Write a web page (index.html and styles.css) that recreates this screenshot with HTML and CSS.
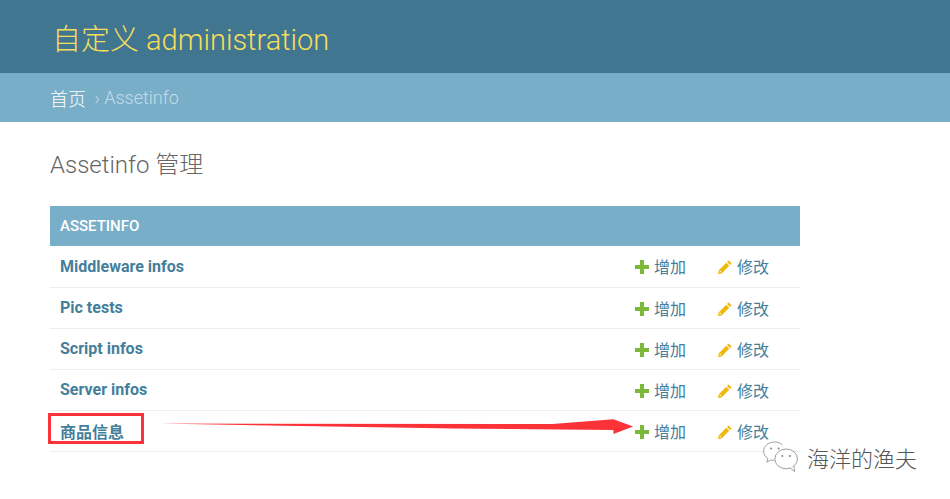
FILE: index.html
```html
<!DOCTYPE html>
<html lang="zh-CN">
<head>
    <meta charset="UTF-8">
    <title>Assetinfo 管理</title>
    <link rel="stylesheet" href="styles.css">
</head>
<body>
    <header class="site-header">
        <h1>自定义 administration</h1>
    </header>
    <nav class="breadcrumbs"><a href="#">首页</a> › Assetinfo</nav>

    <main class="content">
        <h2>Assetinfo 管理</h2>
        <table class="module">
            <caption>ASSETINFO</caption>
            <tbody>
                <tr>
                    <th>Middleware infos</th>
                    <td class="action"><svg class="icon" viewBox="0 0 14 14"><path class="plus" d="M5 0h4v5h5v4H9v5H5V9H0V5h5z"/></svg>增加</td>
                    <td class="action"><svg class="icon" viewBox="0 0 14 14"><path class="pencil" d="M10.6.4l3 3-1.6 1.6-3-3zM8.2 2.8l3 3-7.6 7.6L0 14l.6-3.6zM1.9 10.6l-.5 2 2 -.5z"/></svg>修改</td>
                </tr>
                <tr>
                    <th>Pic tests</th>
                    <td class="action"><svg class="icon" viewBox="0 0 14 14"><path class="plus" d="M5 0h4v5h5v4H9v5H5V9H0V5h5z"/></svg>增加</td>
                    <td class="action"><svg class="icon" viewBox="0 0 14 14"><path class="pencil" d="M10.6.4l3 3-1.6 1.6-3-3zM8.2 2.8l3 3-7.6 7.6L0 14l.6-3.6zM1.9 10.6l-.5 2 2 -.5z"/></svg>修改</td>
                </tr>
                <tr>
                    <th>Script infos</th>
                    <td class="action"><svg class="icon" viewBox="0 0 14 14"><path class="plus" d="M5 0h4v5h5v4H9v5H5V9H0V5h5z"/></svg>增加</td>
                    <td class="action"><svg class="icon" viewBox="0 0 14 14"><path class="pencil" d="M10.6.4l3 3-1.6 1.6-3-3zM8.2 2.8l3 3-7.6 7.6L0 14l.6-3.6zM1.9 10.6l-.5 2 2 -.5z"/></svg>修改</td>
                </tr>
                <tr>
                    <th>Server infos</th>
                    <td class="action"><svg class="icon" viewBox="0 0 14 14"><path class="plus" d="M5 0h4v5h5v4H9v5H5V9H0V5h5z"/></svg>增加</td>
                    <td class="action"><svg class="icon" viewBox="0 0 14 14"><path class="pencil" d="M10.6.4l3 3-1.6 1.6-3-3zM8.2 2.8l3 3-7.6 7.6L0 14l.6-3.6zM1.9 10.6l-.5 2 2 -.5z"/></svg>修改</td>
                </tr>
                <tr>
                    <th>商品信息</th>
                    <td class="action"><svg class="icon" viewBox="0 0 14 14"><path class="plus" d="M5 0h4v5h5v4H9v5H5V9H0V5h5z"/></svg>增加</td>
                    <td class="action"><svg class="icon" viewBox="0 0 14 14"><path class="pencil" d="M10.6.4l3 3-1.6 1.6-3-3zM8.2 2.8l3 3-7.6 7.6L0 14l.6-3.6zM1.9 10.6l-.5 2 2 -.5z"/></svg>修改</td>
                </tr>
            </tbody>
        </table>
    </main>

    <!-- annotations drawn over the screenshot -->
    <div class="red-box"></div>
    <svg class="red-arrow" viewBox="0 0 490 22"><path d="M0 6.500L400 7L462 2 L482 9.500L462 17L462 13L300 11.500z"/></svg>

    <div class="watermark">
        <svg class="wechat" viewBox="0 0 38 34">
            <path d="M21 4.500C19 2 16 1 13 1 6.500 1 1 5.300 1 10.800c0 3.200 2 6 4.500 7.800L4.500 22.500l4.500-2.400c1.300.4 2.500.6 3.500.6"/>
            <ellipse cx="25" cy="19" rx="12" ry="10.500"/>
            <path d="M29 28.500l5 4-.8-6"/>
            <circle cx="9" cy="8" r="1.100"/>
            <circle cx="17" cy="8" r="1.100"/>
            <circle cx="21" cy="16" r="1.100"/>
            <circle cx="29" cy="16" r="1.100"/>
        </svg>
        <span>海洋的渔夫</span>
    </div>
</body>
</html>
```

FILE: styles.css
```css
* {
    box-sizing: border-box;
}

body {
    margin: 0;
    font-family: Roboto, "Noto Sans CJK SC", "Liberation Sans", sans-serif;
    color: #333;
    background: #fff;
    overflow: hidden;
    height: 499px;
}

.site-header {
    height: 73px;
    background: #417690;
    padding: 0 52px;
    display: flex;
    align-items: center;
}

.site-header h1 {
    margin: 0;
    font-size: 29px;
    font-weight: 300;
    color: #f5dd5d;
}

.breadcrumbs {
    height: 49px;
    background: #79aec8;
    padding: 0 50px;
    display: flex;
    align-items: center;
    gap: 4px;
    font-size: 18px;
    font-weight: 300;
    color: #c4dce8;
    white-space: pre;
}

.breadcrumbs a {
    color: #fff;
    text-decoration: none;
}

.content {
    padding: 27px 50px 0;
}

.content h2 {
    margin: 0 0 25px;
    font-size: 24px;
    line-height: 32px;
    font-weight: 300;
    color: #666;
}

.module {
    width: 750px;
    border-collapse: collapse;
    font-size: 16px;
}

.module caption {
    height: 40px;
    line-height: 41px;
    padding-left: 10px;
    text-align: left;
    background: #79aec8;
    color: #fff;
    font-size: 15px;
    font-weight: 500;
}

.module tr {
    height: 41px;
    border-bottom: 1px solid #eee;
}

.module th {
    padding-left: 10px;
    text-align: left;
    color: #447e9b;
    font-weight: 700;
}

.action {
    width: 83px;
    color: #447e9b;
    white-space: nowrap;
}

.action .icon {
    width: 14px;
    height: 14px;
    margin-right: 5px;
    vertical-align: -1px;
}

.plus {
    fill: #7cb83a;
}

.pencil {
    fill: #efb80b;
    fill-rule: evenodd;
}

.red-box {
    position: absolute;
    left: 48px;
    top: 413px;
    width: 96px;
    height: 31px;
    border: 3px solid #fb3338;
}

.red-arrow {
    position: absolute;
    left: 159px;
    top: 417px;
    width: 482px;
    height: 22px;
    fill: #fb3338;
}

.watermark {
    position: absolute;
    left: 762px;
    top: 441px;
    display: flex;
    align-items: center;
    gap: 8px;
    font-size: 22px;
    font-weight: 300;
    color: #555;
}

.wechat {
    width: 37px;
    height: 32px;
    fill: #fff;
    stroke: #999;
    stroke-width: 1;
}

.wechat circle {
    fill: #888;
    stroke: none;
}
```
